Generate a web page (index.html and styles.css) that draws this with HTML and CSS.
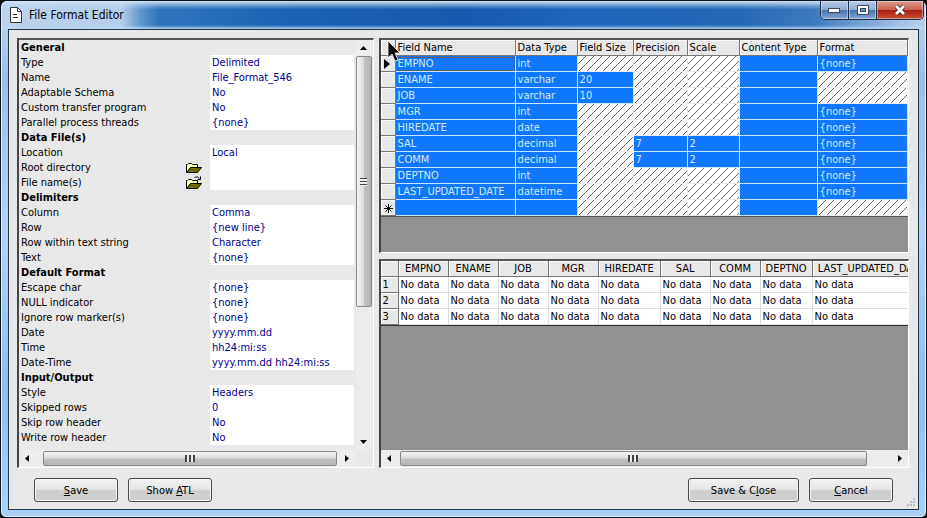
FILE: index.html
```
<!DOCTYPE html>
<html lang="en">
<head>
    <meta charset="UTF-8">
    <meta name="viewport" content="width=device-width, initial-scale=1.0">
    <title>File Format Editor</title>
    <link rel="stylesheet" href="styles.css">
</head>
<body>
    <div class="window">
        <header class="titlebar">
            <svg class="doc-icon" width="14" height="16" viewBox="0 0 14 16">
                <path d="M1.5 .5h7l4 4v11h-11z" fill="#fff" stroke="#333"/>
                <path d="M8.5 .5v4h4" fill="none" stroke="#333"/>
                <path d="M4 7.5h4M4 10.5h5" stroke="#333"/>
            </svg>
            <h1 class="title">File Format Editor</h1>
            <div class="window-buttons">
                <button class="wbtn" aria-label="Minimize">
                    <svg width="13" height="6" viewBox="0 0 13 6"><rect x=".5" y="1.5" width="11" height="4" fill="#fff" stroke="#3a4a63"/></svg>
                </button>
                <button class="wbtn" aria-label="Maximize">
                    <svg width="12" height="10" viewBox="0 0 12 10"><rect x=".5" y=".5" width="11" height="9" fill="#fff" stroke="#3a4a63"/><rect x="3.5" y="3.5" width="5" height="3" fill="#6f8fbb" stroke="#3a4a63"/></svg>
                </button>
                <button class="wbtn wbtn-close" aria-label="Close">
                    <svg width="14" height="12" viewBox="0 0 14 12"><path d="M3 2l8 8M11 2l-8 8" stroke="#4b1c22" stroke-width="4.5"/><path d="M3 2l8 8M11 2l-8 8" stroke="#fff" stroke-width="2.8"/></svg>
                </button>
            </div>
        </header>

        <main class="client">
            <div class="panes">
                <!-- Properties -->
                <section class="panel properties">
                    <div class="prop-view">
                        <table class="prop-table">
                            <colgroup><col class="prop-label"><col></colgroup>
                            <tr><th colspan="2">General</th></tr>
                            <tr><td>Type</td><td class="val">Delimited</td></tr>
                            <tr><td>Name</td><td class="val">File_Format_546</td></tr>
                            <tr><td>Adaptable Schema</td><td class="val">No</td></tr>
                            <tr><td>Custom transfer program</td><td class="val">No</td></tr>
                            <tr><td>Parallel process threads</td><td class="val">{none}</td></tr>
                            <tr><th colspan="2">Data File(s)</th></tr>
                            <tr><td>Location</td><td class="val">Local</td></tr>
                            <tr>
                                <td><div class="with-icon">Root directory
                                    <button class="browse" aria-label="Browse root directory">
                                        <svg width="16" height="14" viewBox="0 0 16 14"><path d="M.5 11.5v-8h1l1-1h3l1 1h5v3" fill="#ffff9c" stroke="#000"/><path d="M.5 11.5l4-5h11l-4 5z" fill="#6b6b00" stroke="#000"/></svg>
                                    </button></div></td>
                                <td class="val"></td>
                            </tr>
                            <tr>
                                <td><div class="with-icon">File name(s)
                                    <button class="browse" aria-label="Browse file names">
                                        <svg width="16" height="14" viewBox="0 0 16 14"><path d="M.5 12.5v-8h1l1-1h3l1 1h5v3" fill="#ffff9c" stroke="#000"/><path d="M.5 12.5l4-5h11l-4 5z" fill="#6b6b00" stroke="#000"/><path d="M8.5 1.5q3-2 5 1M14.5 .5v3h-3" fill="none" stroke="#000"/></svg>
                                    </button></div></td>
                                <td class="val"></td>
                            </tr>
                            <tr><th colspan="2">Delimiters</th></tr>
                            <tr><td>Column</td><td class="val">Comma</td></tr>
                            <tr><td>Row</td><td class="val">{new line}</td></tr>
                            <tr><td>Row within text string</td><td class="val">Character</td></tr>
                            <tr><td>Text</td><td class="val">{none}</td></tr>
                            <tr><th colspan="2">Default Format</th></tr>
                            <tr><td>Escape char</td><td class="val">{none}</td></tr>
                            <tr><td>NULL indicator</td><td class="val">{none}</td></tr>
                            <tr><td>Ignore row marker(s)</td><td class="val">{none}</td></tr>
                            <tr><td>Date</td><td class="val">yyyy.mm.dd</td></tr>
                            <tr><td>Time</td><td class="val">hh24:mi:ss</td></tr>
                            <tr><td>Date-Time</td><td class="val">yyyy.mm.dd hh24:mi:ss</td></tr>
                            <tr><th colspan="2">Input/Output</th></tr>
                            <tr><td>Style</td><td class="val">Headers</td></tr>
                            <tr><td>Skipped rows</td><td class="val">0</td></tr>
                            <tr><td>Skip row header</td><td class="val">No</td></tr>
                            <tr><td>Write row header</td><td class="val">No</td></tr>
                        </table>
                        <div class="scroll-v">
                            <button class="arrow" aria-label="Scroll up"><svg width="7" height="4" viewBox="0 0 7 4"><path d="M0 4l3.5-4L7 4z"/></svg></button>
                            <div class="thumb"><span class="grip"></span></div>
                            <div class="track"></div>
                            <button class="arrow" aria-label="Scroll down"><svg width="7" height="4" viewBox="0 0 7 4"><path d="M0 0l3.5 4L7 0z"/></svg></button>
                        </div>
                    </div>
                    <div class="scroll-h scroll-left">
                        <button class="arrow" aria-label="Scroll left"><svg width="4" height="7" viewBox="0 0 4 7"><path d="M4 0L0 3.5 4 7z"/></svg></button>
                        <div class="thumb"><span class="grip"></span></div>
                        <button class="arrow" aria-label="Scroll right"><svg width="4" height="7" viewBox="0 0 4 7"><path d="M0 0l4 3.5L0 7z"/></svg></button>
                    </div>
                </section>

                <div class="right">
                    <!-- Column attributes -->
                    <section class="panel grey">
                        <table class="grid fields">
                            <colgroup><col class="c-mark"><col class="c-name"><col class="c-type"><col class="c-size"><col class="c-prec"><col class="c-scale"><col class="c-content"><col></colgroup>
                            <tr><th></th><th>Field Name</th><th>Data Type</th><th>Field Size</th><th>Precision</th><th>Scale</th><th>Content Type</th><th>Format</th></tr>
                            <tr><th><svg class="mark" width="6" height="10" viewBox="0 0 6 10"><path d="M0 0l6 5-6 5z"/></svg></th><td class="focus">EMPNO</td><td>int</td><td class="off"></td><td class="off"></td><td class="off"></td><td></td><td>{none}</td></tr>
                            <tr><th></th><td>ENAME</td><td>varchar</td><td>20</td><td class="off"></td><td class="off"></td><td></td><td class="off"></td></tr>
                            <tr><th></th><td>JOB</td><td>varchar</td><td>10</td><td class="off"></td><td class="off"></td><td></td><td class="off"></td></tr>
                            <tr><th></th><td>MGR</td><td>int</td><td class="off"></td><td class="off"></td><td class="off"></td><td></td><td>{none}</td></tr>
                            <tr><th></th><td>HIREDATE</td><td>date</td><td class="off"></td><td class="off"></td><td class="off"></td><td></td><td>{none}</td></tr>
                            <tr><th></th><td>SAL</td><td>decimal</td><td class="off"></td><td>7</td><td>2</td><td></td><td>{none}</td></tr>
                            <tr><th></th><td>COMM</td><td>decimal</td><td class="off"></td><td>7</td><td>2</td><td></td><td>{none}</td></tr>
                            <tr><th></th><td>DEPTNO</td><td>int</td><td class="off"></td><td class="off"></td><td class="off"></td><td></td><td>{none}</td></tr>
                            <tr><th></th><td>LAST_UPDATED_DATE</td><td>datetime</td><td class="off"></td><td class="off"></td><td class="off"></td><td></td><td>{none}</td></tr>
                            <tr><th><svg class="mark" width="9" height="9" viewBox="0 0 9 9"><path d="M4.5 0v9M0 4.5h9M1.5 1.5l6 6M7.5 1.5l-6 6" stroke="#000"/></svg></th><td></td><td></td><td class="off"></td><td class="off"></td><td class="off"></td><td></td><td class="off"></td></tr>
                        </table>
                        <svg class="pointer" width="13" height="23" viewBox="0 0 13 23"><path d="M1 1v17l4-4 3 7 3-1-3-7h5z" fill="#000" stroke="#fff" stroke-width=".8"/></svg>
                    </section>

                    <!-- Data preview -->
                    <section class="panel grey">
                        <div class="preview-view">
                            <table class="grid preview">
                                <colgroup><col class="p-num"><col class="p-col"><col class="p-col"><col class="p-col"><col class="p-col"><col class="p-hire"><col class="p-col"><col class="p-col"><col class="p-dept"><col class="p-last"></colgroup>
                                <tr><th></th><th>EMPNO</th><th>ENAME</th><th>JOB</th><th>MGR</th><th>HIREDATE</th><th>SAL</th><th>COMM</th><th>DEPTNO</th><th>LAST_UPDATED_DATE</th></tr>
                                <tr><th>1</th><td>No data</td><td>No data</td><td>No data</td><td>No data</td><td>No data</td><td>No data</td><td>No data</td><td>No data</td><td>No data</td></tr>
                                <tr><th>2</th><td>No data</td><td>No data</td><td>No data</td><td>No data</td><td>No data</td><td>No data</td><td>No data</td><td>No data</td><td>No data</td></tr>
                                <tr><th>3</th><td>No data</td><td>No data</td><td>No data</td><td>No data</td><td>No data</td><td>No data</td><td>No data</td><td>No data</td><td>No data</td></tr>
                            </table>
                        </div>
                        <div class="scroll-h">
                            <button class="arrow" aria-label="Scroll left"><svg width="4" height="7" viewBox="0 0 4 7"><path d="M4 0L0 3.5 4 7z"/></svg></button>
                            <div class="thumb"><span class="grip"></span></div>
                            <div class="track"></div>
                            <button class="arrow" aria-label="Scroll right"><svg width="4" height="7" viewBox="0 0 4 7"><path d="M0 0l4 3.5L0 7z"/></svg></button>
                        </div>
                    </section>
                </div>
            </div>

            <footer class="actions">
                <button class="btn"><u>S</u>ave</button>
                <button class="btn">Show <u>A</u>TL</button>
                <span class="spacer"></span>
                <button class="btn btn-wide">Save &amp; C<u>l</u>ose</button>
                <button class="btn"><u>C</u>ancel</button>
            </footer>
            <svg class="resize" width="10" height="10" viewBox="0 0 10 10" fill="#bbb"><path d="M7 0h2v2h-2zM4 3h2v2h-2zM7 3h2v2h-2zM1 6h2v2h-2zM4 6h2v2h-2zM7 6h2v2h-2z"/></svg>
        </main>
    </div>
</body>
</html>
```
FILE: styles.css
```
* {
    box-sizing: border-box;
}
body {
    margin: 0;
    background: #111;
    font-family: Tahoma, "DejaVu Sans Condensed", "Noto Sans", sans-serif;
    font-size: 11px;
    color: #000;
}
button {
    font: inherit;
    padding: 0;
}
svg {
    display: block;
}

/* window frame */
.window {
    display: flex;
    flex-direction: column;
    min-height: 100vh;
    padding: 0 7px 7px;
    border: 1px solid #0b1622;
    border-radius: 7px 7px 6px 6px;
    background: linear-gradient(#c3d8ee, #9dbfe4 15%, #b4d2f0 45%, #8fbdf0 75%, #a9d0f8);
    box-shadow: inset 0 0 0 1px #e3f0fb;
}
.titlebar {
    display: flex;
    align-items: center;
    height: 28px;
    margin: 0 -6px;
    padding-left: 7px;
    border-radius: 6px 6px 0 0;
    background:
        linear-gradient(#d5e3f3, rgba(190, 212, 238, .5) 15%, transparent 30%, transparent 86%, rgba(190, 215, 240, .9)),
        linear-gradient(90deg, #bdd3ea, #b4cde9 13%, #5f97cb 15%, #2f75bd 17%, #1b63b3 30%, #1759ae 50%, #1d66bb 62%, #2467b4 80%, #3d7bbf 88%, #b3cdea 99%);
}
.doc-icon {
    margin-right: 6px;
}
.title {
    margin: 0;
    font-size: 12px;
    font-weight: normal;
}
.window-buttons {
    display: flex;
    align-self: flex-start;
    margin-left: auto;
    margin-right: 1px;
    border: 1px solid #1f2f48;
    border-top: 0;
    border-radius: 0 0 5px 5px;
    overflow: hidden;
}
.wbtn {
    display: flex;
    align-items: center;
    justify-content: center;
    width: 28px;
    height: 18px;
    border: 0;
    border-right: 1px solid #1f2f48;
    background: linear-gradient(#b7cbe5, #8eabd2 48%, #4a74ae 52%, #7fa6d8);
    box-shadow: inset 0 0 0 1px rgba(255, 255, 255, .4);
}
.wbtn-close {
    width: 46px;
    border-right: 0;
    background: linear-gradient(#dd9a90, #c9604f 48%, #a8200f 52%, #c9503a);
}

.client {
    position: relative;
    flex: 1;
    display: flex;
    flex-direction: column;
    padding: 8px 9px 0 8px;
    border: 1px solid #1f3850;
    background: #e8e8e8;
}
.panes {
    flex: 1;
    display: grid;
    grid-template-columns: minmax(0, 357fr) minmax(0, 531fr);
    gap: 5px;
}
.panel {
    position: relative;
    display: flex;
    flex-direction: column;
    border: 2px solid #444;
    border-top-color: #555;
    border-right: 1px solid #fff;
    border-bottom: 1px solid #fff;
    background: #e8e8e8;
    min-width: 0;
}
.properties {
    padding-right: 1px;
}
.grey {
    background: #919191;
}
.right {
    display: grid;
    grid-template-rows: 214fr 209fr;
    gap: 6px;
}

/* property list */
.prop-view {
    flex: 1;
    display: flex;
    gap: 2px;
}
.prop-table {
    flex: 1;
    align-self: flex-start;
    table-layout: fixed;
    border-collapse: collapse;
}
.prop-label {
    width: 191px;
}
.prop-table th,
.prop-table td {
    height: 15px;
    padding: 1px 2px 0;
    line-height: 14px;
    text-align: left;
    white-space: nowrap;
}
.prop-table .val {
    background: #fff;
    color: #000090;
}
.with-icon {
    display: flex;
    justify-content: space-between;
    padding-right: 6px;
}
.browse {
    height: 14px;
    border: 0;
    background: none;
}

/* grids */
.grid {
    table-layout: fixed;
    border-collapse: separate;
    border-spacing: 0;
    line-height: 14px;
    white-space: nowrap;
}
.grid th,
.grid td {
    height: 16px;
    padding: 1px 2px 0;
    overflow: hidden;
    text-align: left;
    font-weight: normal;
    border-right: 1px solid #ddd;
    border-bottom: 1px solid #ddd;
}
.grid th {
    background: #e8e8e8;
    border-color: #777;
    box-shadow: inset 1px 1px 0 #fafafa;
}
.fields {
    width: 100%;
    border-bottom: 1px solid #555;
}
.fields td {
    background: #0f78ff;
    color: #cfeaff;
    border-color: #c4e6ff;
}
.fields .off {
    background: linear-gradient(135deg, #fff 45%, #666 49%, #666 51%, #fff 55%) 0 0 / 8px 8px;
    border-color: #eee;
}
.fields .focus {
    outline: 1px dotted #555;
    outline-offset: -2px;
}
.mark {
    margin-left: 1px;
}
.c-mark { width: 15px; }
.c-name { width: 120px; }
.c-type { width: 62px; }
.c-size { width: 56px; }
.c-prec { width: 54px; }
.c-scale { width: 52px; }
.c-content { width: 78px; }
.pointer {
    position: absolute;
    left: 6px;
    top: 0;
}
.preview-view {
    flex: 1;
    overflow: hidden;
}
.preview {
    width: 550px;
    border-bottom: 1px solid #333;
}
.preview tr:first-child th {
    text-align: center;
}
.preview td {
    background: #fff;
}
.p-num { width: 18px; }
.p-col { width: 50px; }
.p-hire { width: 62px; }
.p-dept { width: 52px; }
.p-last { width: 118px; }

/* scrollbars */
.scroll-v,
.scroll-h {
    display: flex;
    background: #ececec;
}
.scroll-v {
    flex-direction: column;
    width: 16px;
}
.scroll-h {
    height: 17px;
}
.scroll-left {
    margin-right: 17px;
}
.arrow {
    display: flex;
    align-items: center;
    justify-content: center;
    border: 0;
    background: none;
}
.scroll-v .arrow {
    height: 16px;
}
.scroll-h .arrow {
    width: 16px;
}
.thumb {
    display: flex;
    align-items: center;
    justify-content: center;
    border: 1px solid #888;
    border-radius: 2px;
}
.scroll-v .thumb {
    flex: 249;
    background: linear-gradient(90deg, #f4f4f4, #dcdcdc 48%, #c2c2c2 52%, #b4b4b4);
}
.scroll-v .track {
    flex: 127;
}
.scroll-h .thumb {
    flex: 470;
    margin: 1px 1px 1px 3px;
    background: linear-gradient(#f4f4f4, #dcdcdc 48%, #c2c2c2 52%, #b4b4b4);
}
.scroll-left .thumb {
    margin: 1px 2px 1px 8px;
}
.scroll-h .track {
    flex: 24;
}
.grip {
    width: 10px;
    height: 7px;
    background: repeating-linear-gradient(90deg, #444 0 2px, #eee 2px 4px);
}
.scroll-v .grip {
    width: 7px;
    height: 8px;
    background: repeating-linear-gradient(#444 0 1px, #eee 1px 3px);
}

/* bottom buttons */
.actions {
    display: flex;
    gap: 10px;
    padding: 10px 16px 7px 17px;
}
.spacer {
    flex: 1;
}
.btn {
    width: 84px;
    height: 24px;
    border: 1px solid #4a4a4a;
    border-radius: 3px;
    background: linear-gradient(#f2f2f2, #e4e4e4 48%, #cecece 52%, #d0d0d0);
    box-shadow: inset 0 0 0 1px #f4f4f4;
}
.btn-wide {
    width: 111px;
}
.resize {
    position: absolute;
    right: 2px;
    bottom: 1px;
}
```
